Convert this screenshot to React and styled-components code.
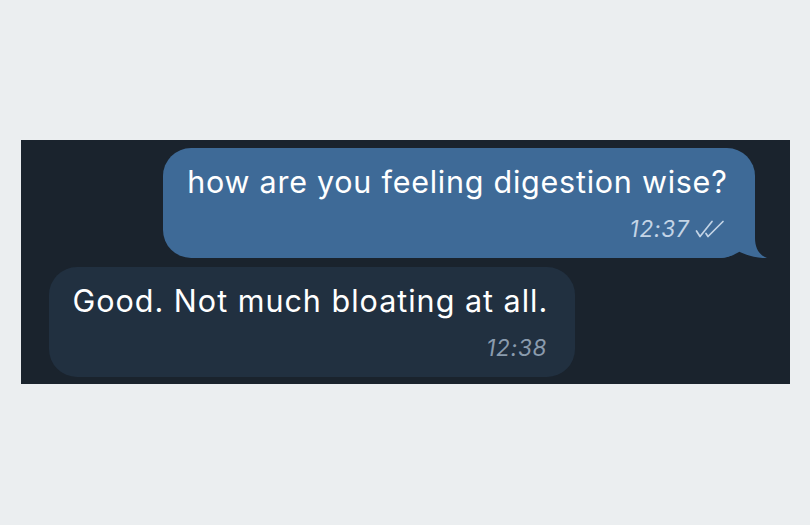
import React from "react";
import styled, { createGlobalStyle } from "styled-components";

const Global = createGlobalStyle`
  html, body { margin: 0; padding: 0; background: #ebeef0; }
  body { font-family: Inter, "Noto Sans", sans-serif; }
`;

const Page = styled.div`
  width: 810px;
  height: 525px;
  display: flex;
  align-items: center;
  justify-content: center;
`;

const Panel = styled.div`
  width: 769px;
  height: 244px;
  box-sizing: border-box;
  background: #1a232d;
  display: flex;
  flex-direction: column;
  gap: 9px;
  padding: 8px 35px 0 28px;
  margin-top: -2px;
`;

const Row = styled.div`
  display: flex;
  justify-content: ${(p) => (p.$out ? "flex-end" : "flex-start")};
`;

const Bubble = styled.div`
  position: relative;
  box-sizing: border-box;
  height: 110px;
  padding: 14px 28px 0 24px;
  border-radius: ${(p) => (p.$out ? "28px 28px 36px 28px" : "28px")};
  background: ${(p) => (p.$out ? "#3e6a97" : "#213040")};
  color: #ffffff;
  display: flex;
  flex-direction: column;
`;

const Text = styled.div`
  font-size: 30.5px;
  line-height: 40px;
  letter-spacing: ${(p) => (p.$wide ? "1px" : "0.75px")};
  white-space: nowrap;
  margin-right: -1px;
`;

const Meta = styled.div`
  position: relative;
  z-index: 1;
  display: flex;
  justify-content: flex-end;
  align-items: center;
  gap: 4px;
  margin-top: 12px;
  color: ${(p) => (p.$out ? "#c3d4e6" : "#8a9bad")};
`;

const Time = styled.span`
  font-size: 22.5px;
  font-style: italic;
  line-height: 30px;
  letter-spacing: 0.8px;
`;

const CheckIcon = styled.svg`
  display: block;
  flex: none;
  width: 32px;
  height: 20px;
  margin-right: 1px;
`;

const Tail = styled.svg`
  position: absolute;
  right: -12px;
  bottom: 0;
  width: 48px;
  height: 36px;
`;

const Checks = () => (
  <CheckIcon viewBox="0 0 32 20" fill="none" stroke="currentColor"
    strokeWidth="1.7" strokeLinecap="round" strokeLinejoin="round">
    <path d="M2.5 12 L6 17.5 L18 2.5" />
    <path d="M12 14.5 L14 17.5 L29 2.5" />
  </CheckIcon>
);

export default function App() {
  return (
    <>
      <Global />
      <Page>
        <Panel>
          <Row $out>
            <Bubble $out>
              <Text>how are you feeling digestion wise?</Text>
              <Meta $out>
                <Time>12:37</Time>
                <Checks />
              </Meta>
              <Tail viewBox="0 0 48 36">
                <path
                  d="M0 0 H36 V16 C36 26 40 33 48 36 C40 36.5 28 34 19 29 C14 33 8 36 2 36 H0 Z"
                  fill="#3e6a97"
                />
              </Tail>
            </Bubble>
          </Row>
          <Row>
            <Bubble>
              <Text $wide>Good. Not much bloating at all.</Text>
              <Meta>
                <Time>12:38</Time>
              </Meta>
            </Bubble>
          </Row>
        </Panel>
      </Page>
    </>
  );
}
